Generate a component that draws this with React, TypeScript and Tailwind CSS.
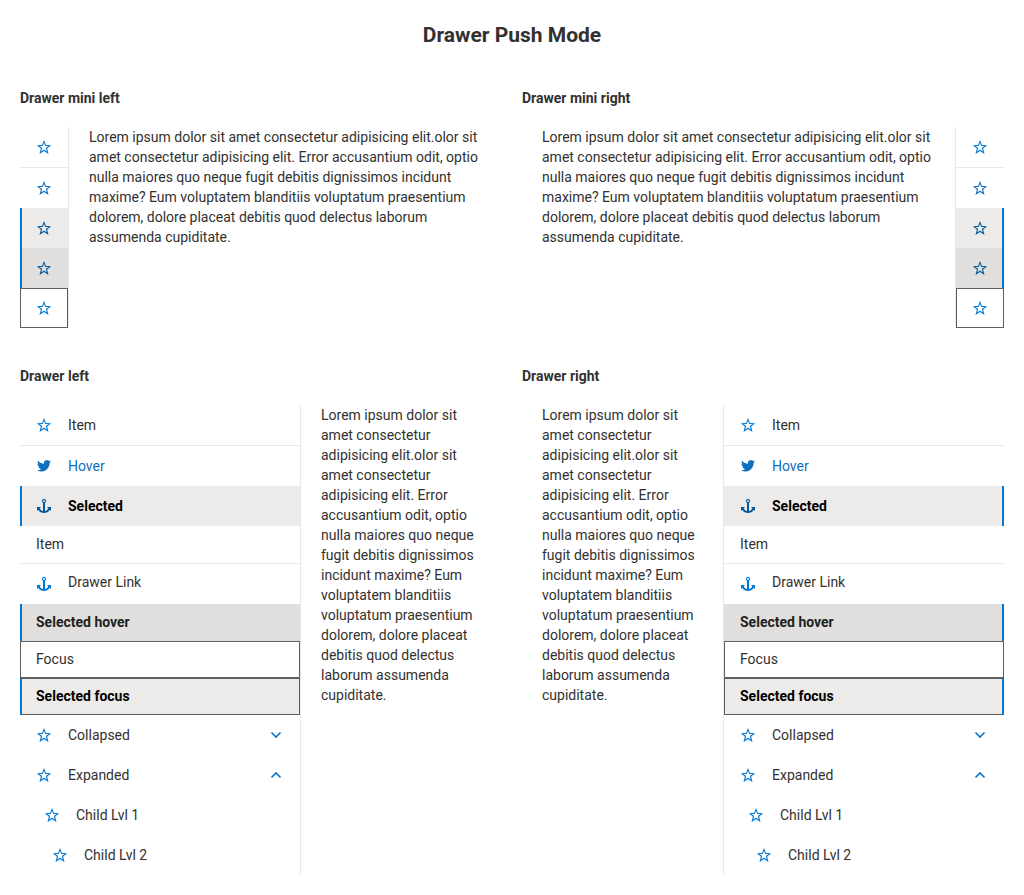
import React from "react";

type IconName = "star" | "twitter" | "anchor";
type Side = "left" | "right";

const paths: Record<IconName, string> = {
  star: "M8 0.900 9.950 5.900 15.200 6.200 11.150 9.500 12.500 14.900 8 12 3.500 14.900 4.850 9.500 0.800 6.200 6.050 5.900zM8 3.700 6.800 6.950 3.600 7.100 6.150 9.100 5.250 12.400 8 10.600 10.750 12.400 9.850 9.100 12.400 7.100 9.200 6.950z",
  twitter:
    "M23.953 4.57a10 10 0 01-2.825.775 4.958 4.958 0 002.163-2.723c-.951.555-2.005.959-3.127 1.184a4.92 4.92 0 00-8.384 4.482C7.69 8.095 4.067 6.13 1.64 3.162a4.822 4.822 0 00-.666 2.475c0 1.71.87 3.213 2.188 4.096a4.904 4.904 0 01-2.228-.616v.06a4.923 4.923 0 003.946 4.827 4.996 4.996 0 01-2.212.085 4.936 4.936 0 004.604 3.417 9.867 9.867 0 01-6.102 2.105c-.39 0-.779-.023-1.17-.067a13.995 13.995 0 007.557 2.209c9.053 0 13.998-7.496 13.998-13.985 0-.21 0-.42-.015-.63A9.935 9.935 0 0024 4.59z",
  anchor:
    "M1 9h4l-1.300 1.400C4.600 12 5.800 12.800 7 13V4.750a2 2 0 1 1 2 0V13c1.200-.2 2.400-1 3.300-2.600L11 9h4v4l-1.200-1.200C12.400 13.900 10.300 15 8 15s-4.400-1.100-5.800-3.200L1 13zM8 2a1 1 0 1 0 0 2 1 1 0 0 0 0-2z",
};

function Icon({ name, className = "text-[#0078d4]" }: { name: IconName; className?: string }) {
  return (
    <svg viewBox="0 0 16 16" className={`size-4 shrink-0 fill-current ${className}`} aria-hidden="true">
      <path fillRule="evenodd" d={paths[name]} transform={name === "twitter" ? "translate(1 0.8) scale(0.583)" : undefined} />
    </svg>
  );
}

function Chevron({ up = false }: { up?: boolean }) {
  return (
    <svg viewBox="0 0 16 16" className="ml-auto size-4 shrink-0 text-[#0078d4]" fill="none" stroke="currentColor" strokeWidth="1.6" aria-hidden="true">
      <path d={up ? "M3.500 10.500 8 6l4.500 4.500" : "M3.500 5.500 8 10l4.500-4.500"} />
    </svg>
  );
}

function Accent({ side }: { side: Side }) {
  return <span className={`absolute inset-y-0 w-0.5 bg-[#0078d4] ${side === "left" ? "left-0" : "right-0"}`} />;
}

function Lorem() {
  return (
    <p className="min-w-0 flex-1 px-5">
      Lorem ipsum dolor sit amet consectetur adipisicing elit.olor sit amet consectetur adipisicing elit. Error accusantium odit, optio nulla maiores quo neque fugit debitis dignissimos incidunt maxime? Eum voluptatem blanditiis voluptatum praesentium dolorem, dolore placeat debitis quod delectus laborum assumenda cupiditate.
    </p>
  );
}

function MiniItems({ side }: { side: Side }) {
  const cell = "relative flex h-10 items-center justify-center";
  return (
    <ul className="w-12">
      <li className={cell}><Icon name="star" /></li>
      <li className="h-px bg-[#e9e9e9]" />
      <li className={cell}><Icon name="star" className="text-[#106ebe]" /></li>
      <li className={`${cell} bg-[#edebe9]`}><Icon name="star" className="text-[#005a9e]" /><Accent side={side} /></li>
      <li className={`${cell} bg-[#e1dfdd]`}><Icon name="star" className="text-[#005a9e]" /><Accent side={side} /></li>
      <li className={`${cell} border border-[#605e5c]`}><Icon name="star" /></li>
    </ul>
  );
}

function FullItems({ side }: { side: Side }) {
  const row = "relative flex h-10 items-center gap-4 px-4";
  const short = "relative flex h-[37px] items-center px-4 pb-px";
  return (
    <ul className="w-[280px]">
      <li className={row}><Icon name="star" />Item</li>
      <li className="h-px bg-[#e9e9e9]" />
      <li className={`${row} text-[#106ebe]`}><Icon name="twitter" className="text-[#106ebe]" />Hover</li>
      <li className={`${row} bg-[#edebe9] font-bold text-black`}><Icon name="anchor" className="text-[#005a9e]" />Selected<Accent side={side} /></li>
      <li className={short}>Item</li>
      <li className="h-px bg-[#e9e9e9]" />
      <li className={row}><Icon name="anchor" /><span className="pb-1">Drawer Link</span></li>
      <li className={`${short} bg-[#e1dfdd] font-bold text-[#201f1e]`}>Selected hover<Accent side={side} /></li>
      <li className={`${short} outline -outline-offset-1 outline-[#605e5c]`}>Focus</li>
      <li className={`${short} bg-[#edebe9] font-bold text-black outline -outline-offset-1 outline-[#605e5c]`}>Selected focus<Accent side={side} /></li>
      <li className={row}><Icon name="star" />Collapsed<Chevron /></li>
      <li className={row}><Icon name="star" />Expanded<Chevron up /></li>
      <li className={`${row} pl-6`}><Icon name="star" />Child Lvl 1</li>
      <li className={`${row} pl-8`}><Icon name="star" />Child Lvl 2</li>
    </ul>
  );
}

function Section({ title, side, mini = false }: { title: string; side: Side; mini?: boolean }) {
  return (
    <section>
      <h2 className="mb-[19px] font-bold leading-5">{title}</h2>
      <div className={`flex items-stretch ${side === "right" ? "flex-row-reverse" : ""}`}>
        <div className={`shrink-0 border-[#e9e9e9] ${side === "left" ? "border-r" : "border-l"}`}>
          {mini ? <MiniItems side={side} /> : <FullItems side={side} />}
        </div>
        <Lorem />
      </div>
    </section>
  );
}

export default function App() {
  return (
    <main className="h-[895px] overflow-hidden bg-white px-5 pt-5 font-['Roboto',sans-serif] text-sm leading-5 text-[#323130]">
      <h1 className="text-center text-[21px] font-bold leading-[30px]">Drawer Push Mode</h1>
      <div className="mt-[38px] grid grid-cols-2 gap-x-5 gap-y-[38px]">
        <Section title="Drawer mini left" side="left" mini />
        <Section title="Drawer mini right" side="right" mini />
        <Section title="Drawer left" side="left" />
        <Section title="Drawer right" side="right" />
      </div>
    </main>
  );
}
